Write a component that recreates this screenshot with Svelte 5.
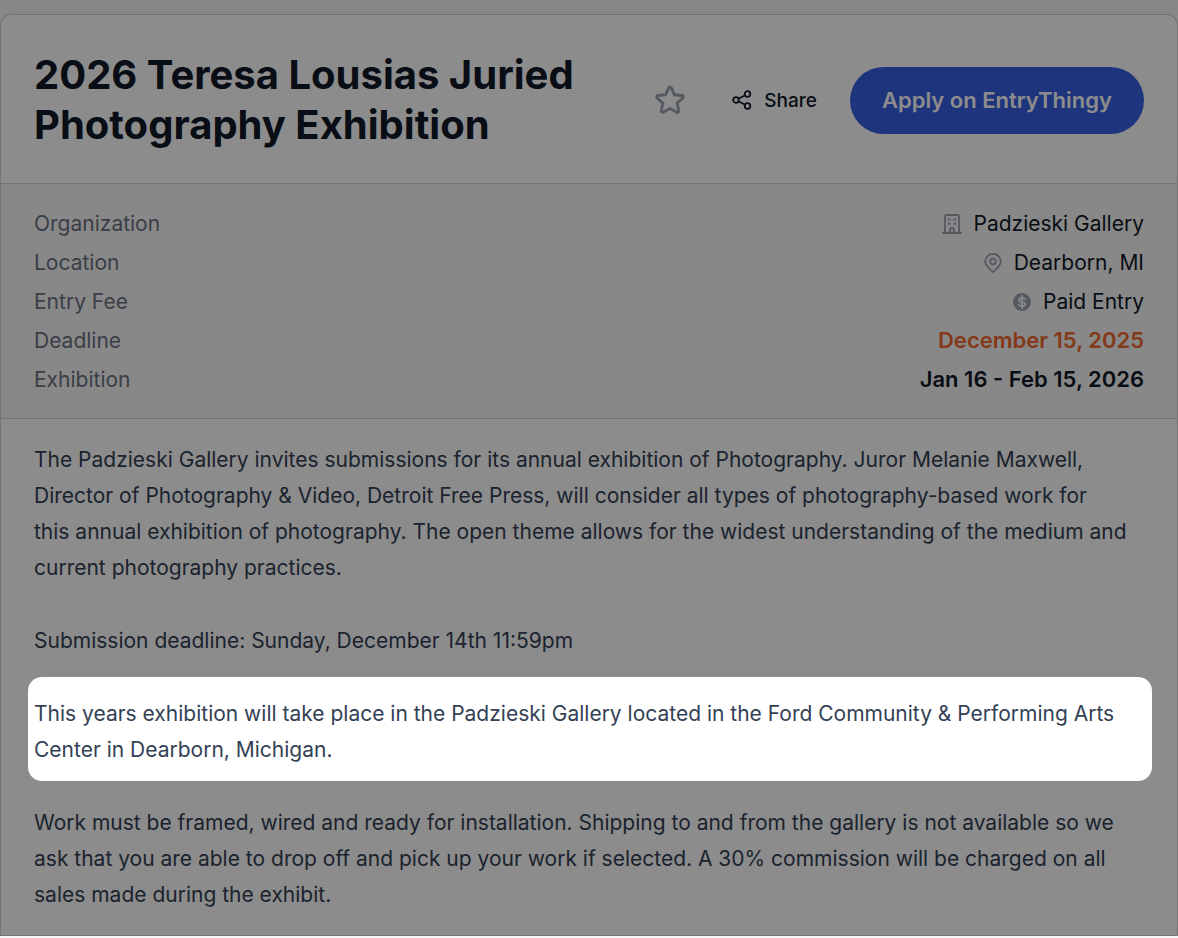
<script lang="ts">
	let starred = $state(false);

	const intro = [
		'The Padzieski Gallery invites submissions for its annual exhibition of Photography. Juror Melanie Maxwell, Director of Photography & Video, Detroit Free Press, will consider all types of photography-based work for\nthis annual exhibition of photography. The open theme allows for the widest understanding of the medium and current photography practices.',
		'Submission deadline: Sunday, December 14th 11:59pm'
	];
	const venue =
		'This years exhibition will take place in the Padzieski Gallery located in the Ford Community & Performing Arts Center in Dearborn, Michigan.';
	const terms =
		'Work must be framed, wired and ready for installation. Shipping to and from the gallery is not available so we ask that you are able to drop off and pick up your work if selected. A 30% commission will be charged on all sales made during the exhibit.';
</script>

<main>
	<article class="card">
		<header>
			<h1>2026 Teresa Lousias Juried Photography Exhibition</h1>
			<div class="actions">
				<button
					class="star"
					type="button"
					aria-label="Save"
					aria-pressed={starred}
					onclick={() => (starred = !starred)}
				>
					<svg viewBox="0 0 24 24" class:starred>
						<path
							d="M11.1 3.300a1 1 0 0 1 1.800 0l2.200 5 5.400.5a1 1 0 0 1 .55 1.750L17 14.200l1.200 5.300a1 1 0 0 1-1.500 1.100L12 17.900l-4.700 2.700a1 1 0 0 1-1.500-1.100L7 14.200l-4.050-3.650A1 1 0 0 1 3.500 8.800l5.400-.5z"
						/>
					</svg>
				</button>
				<button class="share" type="button">
					<svg viewBox="0 0 20 20">
						<circle cx="4" cy="10" r="2.8" />
						<circle cx="15.5" cy="4" r="2.8" />
						<circle cx="15.5" cy="16" r="2.8" />
						<path d="M6.5 8.7l6.5-3.4M6.5 11.3l6.5 3.4" />
					</svg>
					Share
				</button>
				<a class="apply" href="#apply">Apply on EntryThingy</a>
			</div>
		</header>

		<dl>
			<div class="row">
				<dt>Organization</dt>
				<dd>
					<svg viewBox="0 0 20 20">
						<path
							d="M1 19h18M3 19V2.500Q3 1 4.500 1h11Q17 1 17 2.500V19M8 19v-3.500q0-1.500 1.500-1.500h1q1.500 0 1.500 1.500V19"
						/>
						<path class="windows" d="M6.800 5.500h1M12.200 5.500h1M6.800 9.800h1M12.200 9.800h1" />
					</svg>
					Padzieski Gallery
				</dd>
			</div>
			<div class="row">
				<dt>Location</dt>
				<dd>
					<svg viewBox="0 0 20 20">
						<path d="M10 19C7.500 16.500 2.200 13 2.200 8.600a7.800 7.800 0 0 1 15.600 0C17.800 13 12.500 16.500 10 19z" />
						<circle cx="10" cy="8.500" r="2.800" />
					</svg>
					Dearborn, MI
				</dd>
			</div>
			<div class="row">
				<dt>Entry Fee</dt>
				<dd>
					<svg viewBox="0 0 20 20">
						<circle class="coin" cx="10" cy="10" r="9" />
						<path
							class="dollar"
							d="M10 3.800v12.400M13 7.300C12.500 6.200 11.300 5.800 10 5.800c-1.800 0-3 .8-3 2.100 0 3 6.200 1.300 6.200 4.200 0 1.400-1.400 2.200-3.200 2.200-1.500 0-2.800-.6-3.300-1.800"
						/>
					</svg>
					Paid Entry
				</dd>
			</div>
			<div class="row">
				<dt>Deadline</dt>
				<dd class="strong due">December 15, 2025</dd>
			</div>
			<div class="row">
				<dt>Exhibition</dt>
				<dd class="strong">Jan 16 - Feb 15, 2026</dd>
			</div>
		</dl>

		<section class="description">
			{#each intro as text}
				<p>{text}</p>
			{/each}
			<p class="spotlight">{venue}</p>
			<p>{terms}</p>
		</section>
	</article>
</main>

<style>
	:global(body) {
		background: #f6f6f6;
	}
	main {
		padding-top: 14px;
		font-family: Inter, 'Liberation Sans', sans-serif;
		font-size: 21px;
		color: #111827;
	}
	.card {
		background: #fff;
		border: 1px solid #cfd1d5;
		border-bottom: 0;
		border-radius: 11px 11px 0 0;
	}
	header {
		display: flex;
		align-items: center;
		justify-content: space-between;
		gap: 32px;
		padding: 35px 33px 33px;
	}
	h1 {
		flex: 1;
		max-width: 560px;
		margin: 0;
		font-size: 40px;
		line-height: 50px;
		font-weight: 700;
	}
	.actions {
		display: flex;
		align-items: center;
		flex-shrink: 0;
		gap: 33px;
	}
	button {
		display: flex;
		align-items: center;
		padding: 0;
		border: 0;
		background: none;
		color: inherit;
		font: inherit;
		cursor: pointer;
	}
	svg {
		flex-shrink: 0;
		width: 20px;
		height: 20px;
		fill: none;
		stroke: currentColor;
		stroke-width: 1.8;
		stroke-linecap: round;
		stroke-linejoin: round;
	}
	.star {
		padding: 0 12px 0 0;
		color: #9ca3af;
	}
	.star svg {
		width: 34px;
		height: 34px;
		stroke-width: 2;
	}
	.star svg.starred {
		fill: currentColor;
	}
	.share {
		gap: 12px;
		font-size: 19px;
		font-weight: 500;
	}
	.apply {
		padding: 0 32px;
		border-radius: 34px;
		background: #375fe4;
		color: #fff;
		font-size: 22px;
		font-weight: 600;
		line-height: 67px;
		text-decoration: none;
	}
	dl {
		margin: 0;
		padding: 20px 33px 19px;
		border-top: 1px solid #cfd1d5;
		border-bottom: 1px solid #cfd1d5;
		background: #f8f8f9;
	}
	.row {
		display: flex;
		justify-content: space-between;
		line-height: 39px;
	}
	dt {
		color: #6b7280;
	}
	dd {
		display: flex;
		align-items: center;
		gap: 11px;
		margin: 0;
	}
	dd svg {
		color: #9ca3af;
	}
	.windows {
		stroke-width: 2;
	}
	.coin {
		fill: currentColor;
		stroke: none;
	}
	.dollar {
		stroke: #f8f8f9;
	}
	.strong {
		font-size: 22px;
		font-weight: 600;
	}
	.due {
		color: #f0682f;
	}
	.description {
		padding: 23px 33px 22px;
		border-bottom: 1px solid #cfd1d5;
		color: #334155;
		line-height: 36px;
		white-space: normal;
	}
	p {
		margin: 0 0 37px;
		white-space: pre-line;
	}
	p:last-child {
		margin-bottom: 0;
	}
	.spotlight {
		position: relative;
	}
	/* dims everything around the highlighted paragraph */
	.spotlight::after {
		content: '';
		position: absolute;
		inset: -19px -8px -13px -6px;
		border-radius: 14px;
		box-shadow: 0 0 0 200vmax rgba(0, 0, 0, 0.45);
		pointer-events: none;
	}
</style>
